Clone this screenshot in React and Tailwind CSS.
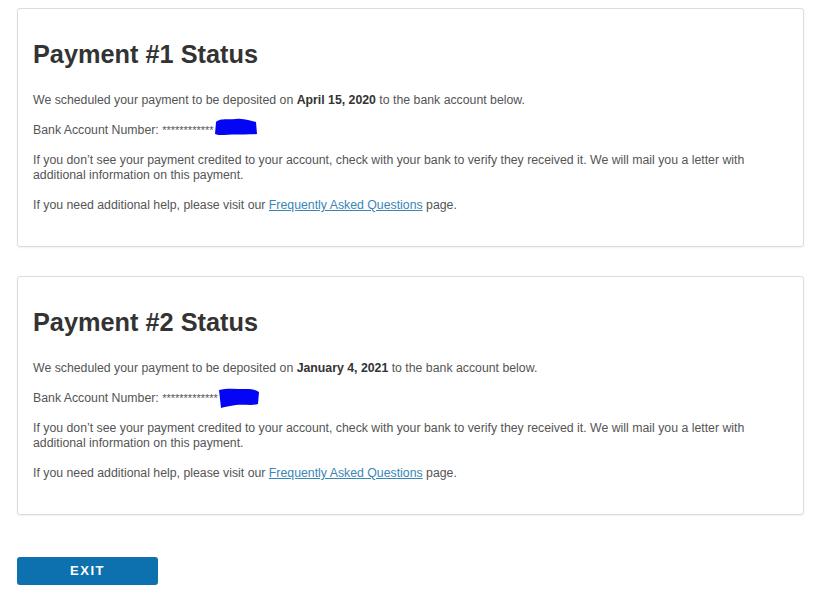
import React from "react";

const payments = [
  { n: 1, date: "April 15, 2020", stars: "************", blob: "M2 6 C6 2 14 4 22 3 C30 2 36 5 42 6 L43 18 C34 19 20 18 10 19 C6 19 3 19 1 18 Z", top: "-top-[8px]" },
  { n: 2, date: "January 4, 2021", stars: "*************", blob: "M1 3 C8 1 18 2 28 2 C34 2 38 3 41 5 L40 17 C34 19 26 17 18 18 C12 19 6 20 3 21 Z", top: "-top-[5px]" },
];

// redaction scribble drawn over the account number
const Redaction = ({ d, top }) => (
  <span className="relative inline-block w-[43px] h-[10px] align-baseline">
    <svg width="44" height="22" viewBox="0 0 44 22" className={`absolute left-0 ${top}`}>
      <path d={d} fill="#0505f5" />
    </svg>
  </span>
);

const PaymentCard = ({ payment }) => (
  <section className="w-[787px] border border-[#dcdcdc] rounded-[3px] bg-white pt-[30px] pb-[19px] px-[15px] shadow-[0_1px_2px_rgba(0,0,0,0.06)]">
    <h2 className="text-[25.3px] leading-[30px] font-bold text-[#333] mb-[24px]">Payment #{payment.n} Status</h2>
    <div className="text-[12.3px] leading-[15px] text-[#555] space-y-[15px]">
      <p>
        We scheduled your payment to be deposited on <b className="text-[#333]">{payment.date}</b> to the bank account below.
      </p>
      <p className="whitespace-nowrap">
        Bank Account Number: <span className="text-[11px]">{payment.stars}</span>
        <Redaction d={payment.blob} top={payment.top} />
      </p>
      <p className="w-[725px]">
        If you don’t see your payment credited to your account, check with your bank to verify they received it. We will mail you a letter with additional information on this payment.
      </p>
      <p className="pb-[14px]">
        If you need additional help, please visit our{" "}
        <a href="#" className="text-[#3a86b4] underline">Frequently Asked Questions</a> page.
      </p>
    </div>
  </section>
);

export default function App() {
  return (
    <div className="min-h-screen bg-white pl-[17px] pt-[8px] font-['Liberation_Sans',Arial,sans-serif]">
      <div className="flex flex-col gap-[29px]">
        {payments.map((p) => (
          <PaymentCard key={p.n} payment={p} />
        ))}
      </div>
      <button className="mt-[42px] w-[141px] h-[28px] rounded-[3px] bg-[#0d71b0] text-white text-[13px] font-bold tracking-[1.5px] flex items-center justify-center">
        EXIT
      </button>
    </div>
  );
}
